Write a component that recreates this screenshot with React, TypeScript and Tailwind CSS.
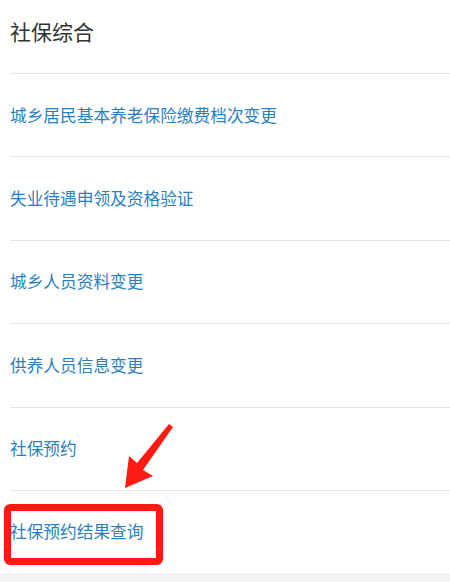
import React from "react";

const items = [
  "城乡居民基本养老保险缴费档次变更",
  "失业待遇申领及资格验证",
  "城乡人员资料变更",
  "供养人员信息变更",
  "社保预约",
  "社保预约结果查询",
];

export default function App() {
  return (
    <div
      className="relative w-[450px] h-[582px] bg-white overflow-hidden"
      style={{ fontFamily: '"Noto Sans CJK SC", "Microsoft YaHei", sans-serif' }}
    >
      <div className="pl-[10px]">
        <div className="h-[73px] pt-[17px] text-[21px] leading-[28px] text-[#333333]">社保综合</div>
        {items.map((t, i) => (
          <div
            key={i}
            className={`border-t border-[#e5e5e5] flex items-center text-[16.7px] text-[#2a7fc2] ${
              i === items.length - 1 ? "h-[83px]" : "h-[83.4px]"
            }`}
          >
            {t}
          </div>
        ))}
      </div>
      <div className="bg-[#f4f4f4] h-[20px]" />

      {/* annotation box */}
      <div className="absolute left-[4px] top-[504px] w-[159px] h-[61px] border-[7px] border-[#ff1a12] rounded-[6px]" />
      {/* annotation arrow */}
      <svg className="absolute left-0 top-0" width="450" height="582" viewBox="0 0 450 582">
        <polygon
          points="169,424 173,427 143,470 153,476 125,488 129,456 137,463"
          fill="#ff1a12"
        />
      </svg>
    </div>
  );
}
